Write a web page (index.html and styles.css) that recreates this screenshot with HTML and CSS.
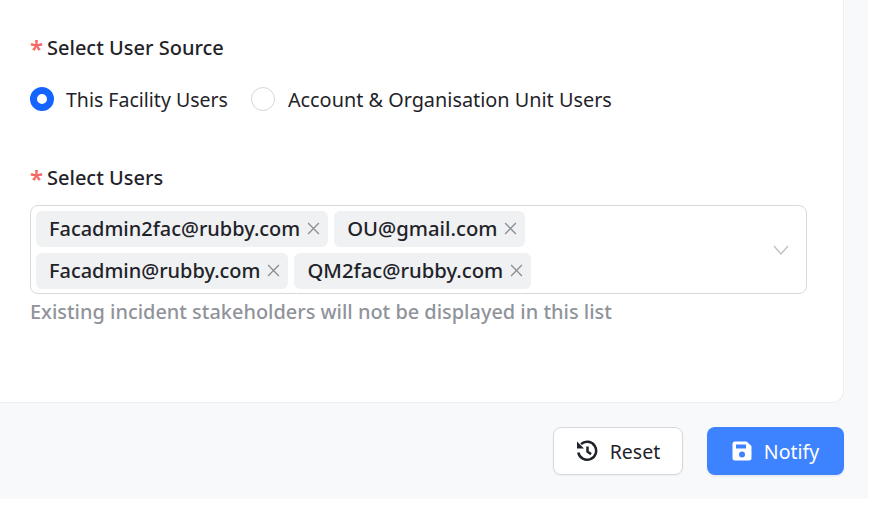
FILE: index.html
```html
<!DOCTYPE html>
<html lang="en">
<head>
<meta charset="utf-8">
<title>Notify stakeholders</title>
<link rel="stylesheet" href="styles.css">
</head>
<body>
<div class="page">
  <form class="card">
    <div class="label label-source"><span class="star">*</span>Select User Source</div>
    <div class="radios">
      <label class="radio radio-first"><span class="dot dot-on"></span>This Facility Users</label>
      <label class="radio radio-second"><span class="dot"></span>Account &amp; Organisation Unit Users</label>
    </div>
    <div class="label label-users"><span class="star">*</span>Select Users</div>
    <div class="select">
      <div class="tags">
        <span class="tag">Facadmin2fac@rubby.com<svg class="x" viewBox="0 0 12 12"><path d="M1 1l10 10M11 1L1 11"/></svg></span>
        <span class="tag tag-wide">OU@gmail.com<svg class="x" viewBox="0 0 12 12"><path d="M1 1l10 10M11 1L1 11"/></svg></span>
        <span class="tag">Facadmin@rubby.com<svg class="x" viewBox="0 0 12 12"><path d="M1 1l10 10M11 1L1 11"/></svg></span>
        <span class="tag tag-wide">QM2fac@rubby.com<svg class="x" viewBox="0 0 12 12"><path d="M1 1l10 10M11 1L1 11"/></svg></span>
      </div>
      <svg class="chev" viewBox="0 0 16 10"><path d="M1 1l7 8 7-8"/></svg>
    </div>
    <div class="hint">Existing incident stakeholders will not be displayed in this list</div>
  </form>
  <div class="actions">
    <button class="btn btn-reset" type="button">
      <svg class="ico-reset" viewBox="0 0 22 22"><path class="ring" d="M5 4.2A9 9 0 1 1 2.3 12.5"/><path class="hands" d="M11.5 6.5v5.2l3.6 2.4"/><path class="arrow" d="M1 1.5v7h7z"/></svg>Reset
    </button>
    <button class="btn btn-notify" type="button">
      <svg class="ico-save" viewBox="0 0 20 20"><path fill-rule="evenodd" d="M3 0.5h11.5L19.5 5v12a2.5 2.5 0 0 1-2.5 2.5H3A2.5 2.5 0 0 1 .5 17V3A2.5 2.5 0 0 1 3 .5zM4 3.5v4h10v-4zM10 10.5a3 3 0 1 0 0 6 3 3 0 0 0 0-6z"/></svg>Notify
    </button>
  </div>
</div>
</body>
</html>
```
FILE: styles.css
```css
* { box-sizing: border-box; }
html, body { margin: 0; background: #fff; }
body { font-family: "Noto Sans", "Open Sans", sans-serif; color: #1f2329; }
.page { width: 868px; height: 499px; background: #f8f9fb; }
.card {
  width: 844px; height: 403px; background: #fff;
  border-right: 1px solid #eceef1; border-bottom: 1px solid #eceef1;
  border-bottom-right-radius: 12px;
  padding: 34px 0 0 30px;
}
.label { font-size: 20px; font-weight: 500; line-height: 28px; height: 28px; display: flex; }
.star { color: #f76964; width: 17px; font-size: 24px; font-weight: 600; line-height: 30px; height: 28px; }
.radios { display: flex; gap: 23px; margin-top: 21px; height: 32px; align-items: center; }
.radio { display: flex; align-items: center; gap: 12px; color: #1f2329; }
.radio-first { font-size: 19.5px; }
.radio-second { font-size: 19.85px; gap: 13px; }
.dot { width: 24px; height: 24px; border-radius: 50%; border: 1px solid #d4d6d9; background: #fff; }
.dot-on { border: 7px solid #1664ff; }
.label-users { margin-top: 49px; }
.select {
  width: 777px; height: 89px; margin-top: 13px; border: 1px solid #d7d9dc; border-radius: 8px;
  padding: 5px; display: flex; position: relative;
}
.tags { display: flex; flex-wrap: wrap; gap: 6px; width: 640px; align-content: flex-start; }
.tag {
  height: 36px; background: #f0f1f2; border-radius: 6px; padding: 0 8px 2px 13px;
  font-size: 19.95px; font-weight: 500; display: inline-flex; align-items: center; gap: 7px;
}
.tag-wide { font-size: 20.25px; }
.x { width: 13px; height: 13px; fill: none; stroke: #8a8e94; stroke-width: 1.2; }
.chev { position: absolute; right: 17px; top: 39px; width: 16px; height: 10px; fill: none; stroke: #c0c2c6; stroke-width: 1.4; }
.hint { margin-top: 3px; font-size: 19.93px; font-weight: 500; color: #90939a; line-height: 30px; }
.actions { display: flex; justify-content: flex-end; gap: 24px; width: 844px; padding-top: 24px; }
.btn {
  height: 48px; border-radius: 8px; font: inherit; font-size: 19.5px; display: flex; align-items: center; justify-content: center;
}
.btn-reset { width: 130px; gap: 12px; background: #fff; border: 1px solid #d7d9dc; color: #1f2329; box-shadow: 0 1px 2px rgba(0,0,0,.05); }
.btn-notify { width: 137px; gap: 12px; background: #3d82fe; border: 0; color: #fff; box-shadow: 0 2px 2px rgba(0,0,0,.06); }
.ico-reset { width: 22px; height: 22px; }
.ico-reset .ring, .ico-reset .hands { fill: none; stroke: currentColor; stroke-width: 2.5; }
.ico-reset .arrow { fill: currentColor; }
.ico-save { width: 20px; height: 20px; fill: currentColor; }
```
